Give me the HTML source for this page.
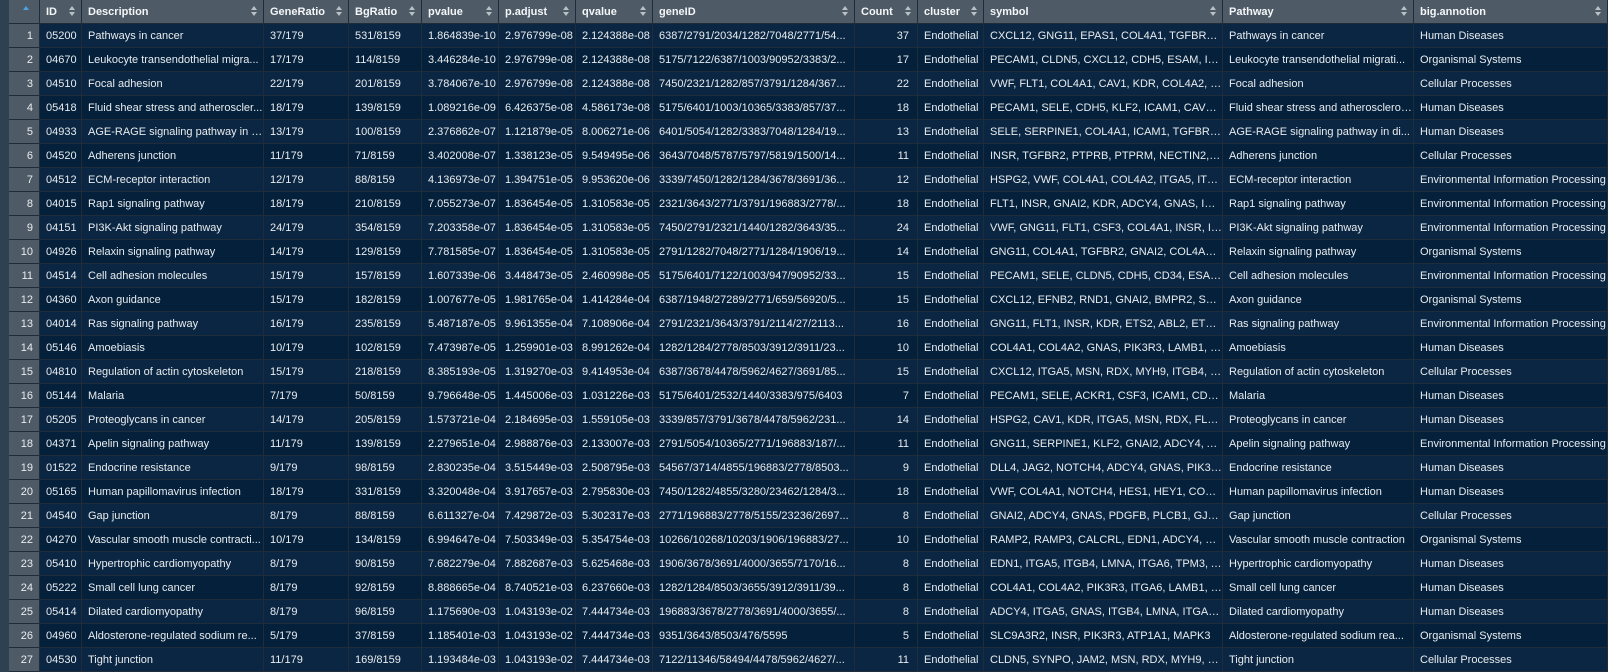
<!DOCTYPE html>
<html><head><meta charset="utf-8"><style>
body{margin:0;background:#0a2540;width:1608px;height:672px;overflow:hidden;font-family:"Liberation Sans",Arial,sans-serif;font-size:11px;color:#e8ecef}
.strip{position:absolute;left:0;top:0;width:9px;height:672px;background:#2e4152}
table{position:absolute;left:9px;top:0;border-collapse:separate;border-spacing:0;table-layout:fixed;width:1599px}
tr{height:24px}
td,th{box-sizing:border-box;height:24px;padding:0 0 0 6px;white-space:nowrap;overflow:hidden;text-overflow:ellipsis;border-right:1px solid #1f2c3a;border-bottom:1px solid #1f2c3a;text-align:left}
th{background:#4e5b67;font-weight:bold;position:relative;color:#f4f6f8}
th::after{content:"";position:absolute;right:6px;top:6px;width:0;height:0;border-left:3px solid transparent;border-right:3px solid transparent;border-bottom:4px solid #b8c0c8}
th::before{content:"";position:absolute;right:6px;top:12px;width:0;height:0;border-left:3px solid transparent;border-right:3px solid transparent;border-top:4px solid #b8c0c8}
th.f::before{display:none}th.f::after{border-bottom-color:#4aa3e6;right:10px}
td.n{background:#4e5b67;text-align:right;padding:0 6px 0 0}
td.r{text-align:right;padding-right:8px}
tr:nth-child(odd) td{background:#0b2642}
tr:nth-child(even) td{background:#04203b}
tr td.n{background:#4e5b67!important}
</style></head><body><div class="strip"></div>
<table>
<colgroup><col style="width:31px"><col style="width:42px"><col style="width:182px"><col style="width:85px"><col style="width:73px"><col style="width:77px"><col style="width:77px"><col style="width:77px"><col style="width:202px"><col style="width:63px"><col style="width:66px"><col style="width:239px"><col style="width:191px"><col style="width:194px"></colgroup>
<thead><tr><th class="f"></th><th>ID</th><th>Description</th><th>GeneRatio</th><th>BgRatio</th><th>pvalue</th><th>p.adjust</th><th>qvalue</th><th>geneID</th><th>Count</th><th>cluster</th><th>symbol</th><th>Pathway</th><th>big.annotion</th></tr></thead>
<tbody>
<tr><td class="n">1</td><td>05200</td><td>Pathways in cancer</td><td>37/179</td><td>531/8159</td><td>1.864839e-10</td><td>2.976799e-08</td><td>2.124388e-08</td><td>6387/2791/2034/1282/7048/2771/54...</td><td class="r">37</td><td>Endothelial</td><td>CXCL12, GNG11, EPAS1, COL4A1, TGFBR2, G...</td><td>Pathways in cancer</td><td>Human Diseases</td></tr>
<tr><td class="n">2</td><td>04670</td><td>Leukocyte transendothelial migra...</td><td>17/179</td><td>114/8159</td><td>3.446284e-10</td><td>2.976799e-08</td><td>2.124388e-08</td><td>5175/7122/6387/1003/90952/3383/2...</td><td class="r">17</td><td>Endothelial</td><td>PECAM1, CLDN5, CXCL12, CDH5, ESAM, ICA...</td><td>Leukocyte transendothelial migrati...</td><td>Organismal Systems</td></tr>
<tr><td class="n">3</td><td>04510</td><td>Focal adhesion</td><td>22/179</td><td>201/8159</td><td>3.784067e-10</td><td>2.976799e-08</td><td>2.124388e-08</td><td>7450/2321/1282/857/3791/1284/367...</td><td class="r">22</td><td>Endothelial</td><td>VWF, FLT1, COL4A1, CAV1, KDR, COL4A2, ITG...</td><td>Focal adhesion</td><td>Cellular Processes</td></tr>
<tr><td class="n">4</td><td>05418</td><td>Fluid shear stress and atheroscler...</td><td>18/179</td><td>139/8159</td><td>1.089216e-09</td><td>6.426375e-08</td><td>4.586173e-08</td><td>5175/6401/1003/10365/3383/857/37...</td><td class="r">18</td><td>Endothelial</td><td>PECAM1, SELE, CDH5, KLF2, ICAM1, CAV1, KD...</td><td>Fluid shear stress and atheroscleros...</td><td>Human Diseases</td></tr>
<tr><td class="n">5</td><td>04933</td><td>AGE-RAGE signaling pathway in d...</td><td>13/179</td><td>100/8159</td><td>2.376862e-07</td><td>1.121879e-05</td><td>8.006271e-06</td><td>6401/5054/1282/3383/7048/1284/19...</td><td class="r">13</td><td>Endothelial</td><td>SELE, SERPINE1, COL4A1, ICAM1, TGFBR2, CO...</td><td>AGE-RAGE signaling pathway in di...</td><td>Human Diseases</td></tr>
<tr><td class="n">6</td><td>04520</td><td>Adherens junction</td><td>11/179</td><td>71/8159</td><td>3.402008e-07</td><td>1.338123e-05</td><td>9.549495e-06</td><td>3643/7048/5787/5797/5819/1500/14...</td><td class="r">11</td><td>Endothelial</td><td>INSR, TGFBR2, PTPRB, PTPRM, NECTIN2, CTN...</td><td>Adherens junction</td><td>Cellular Processes</td></tr>
<tr><td class="n">7</td><td>04512</td><td>ECM-receptor interaction</td><td>12/179</td><td>88/8159</td><td>4.136973e-07</td><td>1.394751e-05</td><td>9.953620e-06</td><td>3339/7450/1282/1284/3678/3691/36...</td><td class="r">12</td><td>Endothelial</td><td>HSPG2, VWF, COL4A1, COL4A2, ITGA5, ITGB4,...</td><td>ECM-receptor interaction</td><td>Environmental Information Processing</td></tr>
<tr><td class="n">8</td><td>04015</td><td>Rap1 signaling pathway</td><td>18/179</td><td>210/8159</td><td>7.055273e-07</td><td>1.836454e-05</td><td>1.310583e-05</td><td>2321/3643/2771/3791/196883/2778/...</td><td class="r">18</td><td>Endothelial</td><td>FLT1, INSR, GNAI2, KDR, ADCY4, GNAS, ID1, ...</td><td>Rap1 signaling pathway</td><td>Environmental Information Processing</td></tr>
<tr><td class="n">9</td><td>04151</td><td>PI3K-Akt signaling pathway</td><td>24/179</td><td>354/8159</td><td>7.203358e-07</td><td>1.836454e-05</td><td>1.310583e-05</td><td>7450/2791/2321/1440/1282/3643/35...</td><td class="r">24</td><td>Endothelial</td><td>VWF, GNG11, FLT1, CSF3, COL4A1, INSR, IL3R...</td><td>PI3K-Akt signaling pathway</td><td>Environmental Information Processing</td></tr>
<tr><td class="n">10</td><td>04926</td><td>Relaxin signaling pathway</td><td>14/179</td><td>129/8159</td><td>7.781585e-07</td><td>1.836454e-05</td><td>1.310583e-05</td><td>2791/1282/7048/2771/1284/1906/19...</td><td class="r">14</td><td>Endothelial</td><td>GNG11, COL4A1, TGFBR2, GNAI2, COL4A2, E...</td><td>Relaxin signaling pathway</td><td>Organismal Systems</td></tr>
<tr><td class="n">11</td><td>04514</td><td>Cell adhesion molecules</td><td>15/179</td><td>157/8159</td><td>1.607339e-06</td><td>3.448473e-05</td><td>2.460998e-05</td><td>5175/6401/7122/1003/947/90952/33...</td><td class="r">15</td><td>Endothelial</td><td>PECAM1, SELE, CLDN5, CDH5, CD34, ESAM, I...</td><td>Cell adhesion molecules</td><td>Environmental Information Processing</td></tr>
<tr><td class="n">12</td><td>04360</td><td>Axon guidance</td><td>15/179</td><td>182/8159</td><td>1.007677e-05</td><td>1.981765e-04</td><td>1.414284e-04</td><td>6387/1948/27289/2771/659/56920/5...</td><td class="r">15</td><td>Endothelial</td><td>CXCL12, EFNB2, RND1, GNAI2, BMPR2, SEMA...</td><td>Axon guidance</td><td>Organismal Systems</td></tr>
<tr><td class="n">13</td><td>04014</td><td>Ras signaling pathway</td><td>16/179</td><td>235/8159</td><td>5.487187e-05</td><td>9.961355e-04</td><td>7.108906e-04</td><td>2791/2321/3643/3791/2114/27/2113...</td><td class="r">16</td><td>Endothelial</td><td>GNG11, FLT1, INSR, KDR, ETS2, ABL2, ETS1, PI...</td><td>Ras signaling pathway</td><td>Environmental Information Processing</td></tr>
<tr><td class="n">14</td><td>05146</td><td>Amoebiasis</td><td>10/179</td><td>102/8159</td><td>7.473987e-05</td><td>1.259901e-03</td><td>8.991262e-04</td><td>1282/1284/2778/8503/3912/3911/23...</td><td class="r">10</td><td>Endothelial</td><td>COL4A1, COL4A2, GNAS, PIK3R3, LAMB1, LA...</td><td>Amoebiasis</td><td>Human Diseases</td></tr>
<tr><td class="n">15</td><td>04810</td><td>Regulation of actin cytoskeleton</td><td>15/179</td><td>218/8159</td><td>8.385193e-05</td><td>1.319270e-03</td><td>9.414953e-04</td><td>6387/3678/4478/5962/4627/3691/85...</td><td class="r">15</td><td>Endothelial</td><td>CXCL12, ITGA5, MSN, RDX, MYH9, ITGB4, PIK...</td><td>Regulation of actin cytoskeleton</td><td>Cellular Processes</td></tr>
<tr><td class="n">16</td><td>05144</td><td>Malaria</td><td>7/179</td><td>50/8159</td><td>9.796648e-05</td><td>1.445006e-03</td><td>1.031226e-03</td><td>5175/6401/2532/1440/3383/975/6403</td><td class="r">7</td><td>Endothelial</td><td>PECAM1, SELE, ACKR1, CSF3, ICAM1, CD81, S...</td><td>Malaria</td><td>Human Diseases</td></tr>
<tr><td class="n">17</td><td>05205</td><td>Proteoglycans in cancer</td><td>14/179</td><td>205/8159</td><td>1.573721e-04</td><td>2.184695e-03</td><td>1.559105e-03</td><td>3339/857/3791/3678/4478/5962/231...</td><td class="r">14</td><td>Endothelial</td><td>HSPG2, CAV1, KDR, ITGA5, MSN, RDX, FLNB, ...</td><td>Proteoglycans in cancer</td><td>Human Diseases</td></tr>
<tr><td class="n">18</td><td>04371</td><td>Apelin signaling pathway</td><td>11/179</td><td>139/8159</td><td>2.279651e-04</td><td>2.988876e-03</td><td>2.133007e-03</td><td>2791/5054/10365/2771/196883/187/...</td><td class="r">11</td><td>Endothelial</td><td>GNG11, SERPINE1, KLF2, GNAI2, ADCY4, APL...</td><td>Apelin signaling pathway</td><td>Environmental Information Processing</td></tr>
<tr><td class="n">19</td><td>01522</td><td>Endocrine resistance</td><td>9/179</td><td>98/8159</td><td>2.830235e-04</td><td>3.515449e-03</td><td>2.508795e-03</td><td>54567/3714/4855/196883/2778/8503...</td><td class="r">9</td><td>Endothelial</td><td>DLL4, JAG2, NOTCH4, ADCY4, GNAS, PIK3R3, ...</td><td>Endocrine resistance</td><td>Human Diseases</td></tr>
<tr><td class="n">20</td><td>05165</td><td>Human papillomavirus infection</td><td>18/179</td><td>331/8159</td><td>3.320048e-04</td><td>3.917657e-03</td><td>2.795830e-03</td><td>7450/1282/4855/3280/23462/1284/3...</td><td class="r">18</td><td>Endothelial</td><td>VWF, COL4A1, NOTCH4, HES1, HEY1, COL4A2...</td><td>Human papillomavirus infection</td><td>Human Diseases</td></tr>
<tr><td class="n">21</td><td>04540</td><td>Gap junction</td><td>8/179</td><td>88/8159</td><td>6.611327e-04</td><td>7.429872e-03</td><td>5.302317e-03</td><td>2771/196883/2778/5155/23236/2697...</td><td class="r">8</td><td>Endothelial</td><td>GNAI2, ADCY4, GNAS, PDGFB, PLCB1, GJA1, T...</td><td>Gap junction</td><td>Cellular Processes</td></tr>
<tr><td class="n">22</td><td>04270</td><td>Vascular smooth muscle contracti...</td><td>10/179</td><td>134/8159</td><td>6.994647e-04</td><td>7.503349e-03</td><td>5.354754e-03</td><td>10266/10268/10203/1906/196883/27...</td><td class="r">10</td><td>Endothelial</td><td>RAMP2, RAMP3, CALCRL, EDN1, ADCY4, GNA...</td><td>Vascular smooth muscle contraction</td><td>Organismal Systems</td></tr>
<tr><td class="n">23</td><td>05410</td><td>Hypertrophic cardiomyopathy</td><td>8/179</td><td>90/8159</td><td>7.682279e-04</td><td>7.882687e-03</td><td>5.625468e-03</td><td>1906/3678/3691/4000/3655/7170/16...</td><td class="r">8</td><td>Endothelial</td><td>EDN1, ITGA5, ITGB4, LMNA, ITGA6, TPM3, AC...</td><td>Hypertrophic cardiomyopathy</td><td>Human Diseases</td></tr>
<tr><td class="n">24</td><td>05222</td><td>Small cell lung cancer</td><td>8/179</td><td>92/8159</td><td>8.888665e-04</td><td>8.740521e-03</td><td>6.237660e-03</td><td>1282/1284/8503/3655/3912/3911/39...</td><td class="r">8</td><td>Endothelial</td><td>COL4A1, COL4A2, PIK3R3, ITGA6, LAMB1, LA...</td><td>Small cell lung cancer</td><td>Human Diseases</td></tr>
<tr><td class="n">25</td><td>05414</td><td>Dilated cardiomyopathy</td><td>8/179</td><td>96/8159</td><td>1.175690e-03</td><td>1.043193e-02</td><td>7.444734e-03</td><td>196883/3678/2778/3691/4000/3655/...</td><td class="r">8</td><td>Endothelial</td><td>ADCY4, ITGA5, GNAS, ITGB4, LMNA, ITGA6, T...</td><td>Dilated cardiomyopathy</td><td>Human Diseases</td></tr>
<tr><td class="n">26</td><td>04960</td><td>Aldosterone-regulated sodium re...</td><td>5/179</td><td>37/8159</td><td>1.185401e-03</td><td>1.043193e-02</td><td>7.444734e-03</td><td>9351/3643/8503/476/5595</td><td class="r">5</td><td>Endothelial</td><td>SLC9A3R2, INSR, PIK3R3, ATP1A1, MAPK3</td><td>Aldosterone-regulated sodium rea...</td><td>Organismal Systems</td></tr>
<tr><td class="n">27</td><td>04530</td><td>Tight junction</td><td>11/179</td><td>169/8159</td><td>1.193484e-03</td><td>1.043193e-02</td><td>7.444734e-03</td><td>7122/11346/58494/4478/5962/4627/...</td><td class="r">11</td><td>Endothelial</td><td>CLDN5, SYNPO, JAM2, MSN, RDX, MYH9, RA...</td><td>Tight junction</td><td>Cellular Processes</td></tr>
</tbody></table>
</body></html>
